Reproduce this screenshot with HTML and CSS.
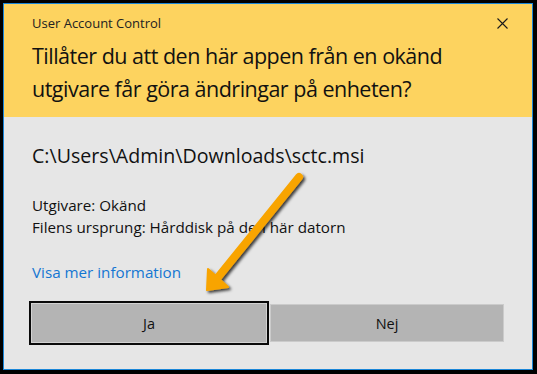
FILE: index.html
```html
<!DOCTYPE html>
<html lang="sv">
<head>
<meta charset="utf-8">
<title>User Account Control</title>
<link rel="stylesheet" href="styles.css">
</head>
<body>
<div class="frame">
  <header class="header">
    <div class="title-row">
      <span class="title">User Account Control</span>
      <svg class="close" width="11" height="11" viewBox="0 0 11 11"><path d="M0.5 0.5 L10.5 10.5 M10.5 0.5 L0.5 10.5" stroke="#1a1a1a" stroke-width="1.1" fill="none"/></svg>
    </div>
    <h1 class="question">Tillåter du att den här appen från en okänd utgivare får göra ändringar på enheten?</h1>
  </header>
  <main class="body">
    <div class="path">C:\Users\Admin\Downloads\sctc.msi</div>
    <div class="details">
      <div>Utgivare: Okänd</div>
      <div>Filens ursprung: Hårddisk på den här datorn</div>
    </div>
    <a class="more" href="#">Visa mer information</a>
    <div class="buttons">
      <button class="btn btn-yes">Ja</button>
      <button class="btn btn-no">Nej</button>
    </div>
  </main>
</div>
<svg class="arrow" width="537" height="374" viewBox="0 0 537 374">
  <defs>
    <filter id="sh" x="-20%" y="-20%" width="140%" height="140%">
      <feDropShadow dx="2" dy="2" stdDeviation="1.6" flood-color="#000" flood-opacity="0.75"/>
    </filter>
  </defs>
  <g filter="url(#sh)" fill="#f8a406" stroke="#f8a406">
    <line x1="299" y1="177" x2="215" y2="281" stroke-width="8" stroke-linecap="round"/>
    <polygon points="207,290 208,269 217,277 228,287" stroke-width="2" stroke-linejoin="round"/>
  </g>
</svg>
</body>
</html>
```
FILE: styles.css
```css
html, body {
  margin: 0;
  padding: 0;
}
body {
  background: #000;
  width: 537px;
  height: 374px;
  overflow: hidden;
  position: relative;
  font-family: "Open Sans", "Noto Sans", sans-serif;
  color: #1a1a1a;
}
.frame {
  margin: 3px 4px 0 3px;
  width: 528px;
  height: 365px;
  border: 1px solid #1a86d8;
  background: #e6e6e6;
  display: flex;
  flex-direction: column;
}
.header {
  background: #fdd35f;
  height: 113px;
  padding: 0 24px 0 28px;
  box-sizing: border-box;
}
.title-row {
  display: flex;
  justify-content: space-between;
  align-items: flex-start;
  padding-top: 11px;
  height: 28px;
  box-sizing: border-box;
}
.title {
  font-size: 13px;
  line-height: 17px;
  color: #222;
}
.close {
  display: block;
  margin-top: 3px;
}
.question {
  margin: 7px 0 0 0;
  font-weight: normal;
  font-size: 21.5px;
  line-height: 33px;
  color: #111;
  letter-spacing: -0.5px;
}
.body {
  flex: 1;
  padding: 25px 0 0 28px;
  box-sizing: border-box;
  display: flex;
  flex-direction: column;
  align-items: flex-start;
}
.path {
  font-size: 19.6px;
  line-height: 28px;
  color: #111;
}
.details {
  margin-top: 24px;
  font-size: 15.2px;
  line-height: 22px;
  color: #111;
}
.more {
  margin-top: 24px;
  font-size: 15.2px;
  line-height: 20px;
  color: #1476d2;
  text-decoration: none;
}
.buttons {
  margin: 19px 0 0 -3px;
  display: flex;
  align-items: center;
}
.btn {
  font-family: inherit;
  font-size: 14.5px;
  color: #111;
  background: #b4b4b4;
  padding: 0;
  box-sizing: border-box;
}
.btn-yes {
  width: 240px;
  height: 44px;
  border: 2px solid #0a0a0a;
  box-shadow: inset 0 0 0 1px #d2d2d2;
}
.btn-no {
  width: 234px;
  height: 38px;
  margin-left: 1px;
  border: 1px solid #cbcbcb;
}
.arrow {
  position: absolute;
  left: 0;
  top: 0;
  pointer-events: none;
}
```
